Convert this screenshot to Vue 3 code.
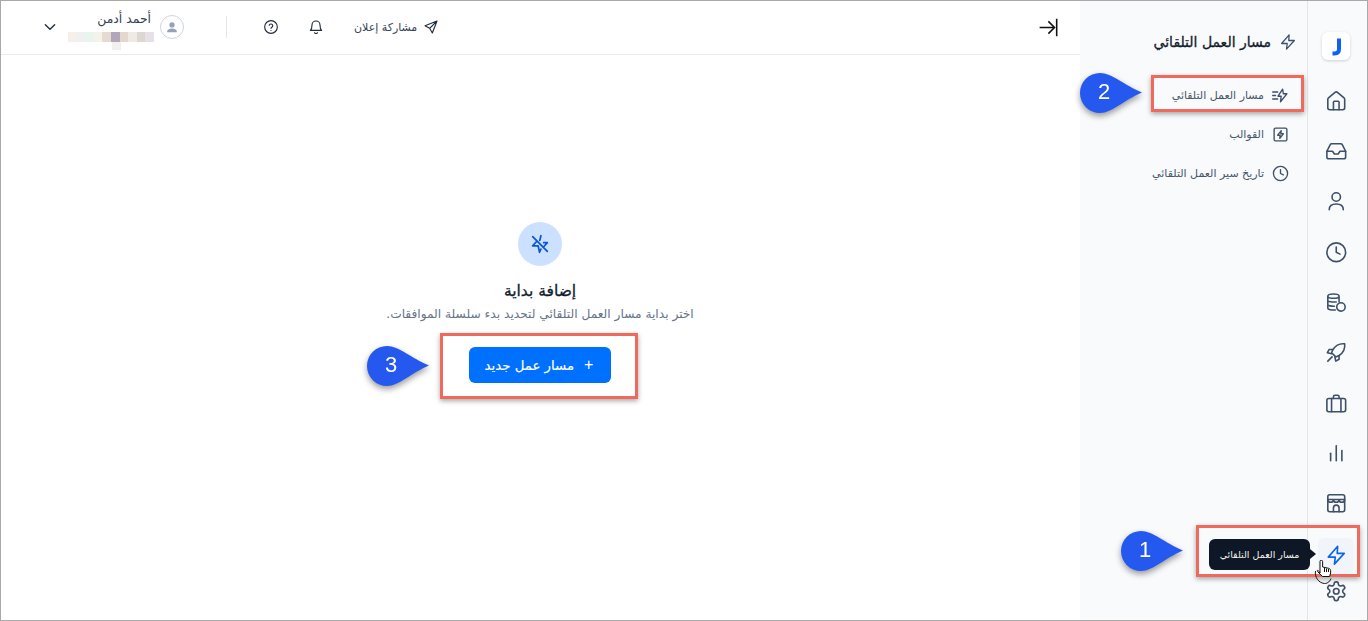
<template>
  <div class="page" dir="rtl">
    <nav class="rail">
      <div class="logo">
        <svg viewBox="0 0 28 28"><path d="M17 6.500V17c0 3-1.800 4.500-4.500 4.500H10.500" /></svg>
      </div>
      <div
        v-for="item in railItems"
        :key="item.name"
        class="rail-item"
        :class="{ active: item.active, short: item.name === 'settings' }"
      >
        <svg class="rail-icon" viewBox="0 0 24 24">
          <path v-for="d in item.paths" :key="d" :d="d" />
        </svg>
      </div>
    </nav>

    <aside class="sidebar">
      <div class="side-title">
        <svg class="title-icon" viewBox="0 0 24 24"><path :d="zap" /></svg>
        <span>مسار العمل التلقائي</span>
      </div>
      <div v-for="link in sideLinks" :key="link.label" class="side-link">
        <svg class="side-icon" viewBox="0 0 24 24">
          <path v-for="d in link.paths" :key="d" :d="d" />
        </svg>
        <span>{{ link.label }}</span>
      </div>
    </aside>

    <main class="main">
      <header class="topbar">
        <svg class="collapse" viewBox="0 0 24 24">
          <path d="M3 12h17M13 5l7 7-7 7M22.500 2v20" />
        </svg>
        <div class="top-actions">
          <div class="share">
            <svg class="top-icon" viewBox="0 0 24 24">
              <path d="M21 3 3 10l7 4 4 7zM21 3 10 14" />
            </svg>
            <span>مشاركة إعلان</span>
          </div>
          <svg class="top-icon bell" viewBox="0 0 24 24">
            <path d="M6 9a6 6 0 0 1 12 0c0 6 2.500 8 2.500 8h-17S6 15 6 9M10 20.500a2.200 2.200 0 0 0 4 0" />
          </svg>
          <svg class="top-icon help" viewBox="0 0 24 24">
            <path d="M12 2.500a9.500 9.500 0 1 0 0 19 9.500 9.500 0 0 0 0-19M9.300 9.300a2.800 2.800 0 0 1 5.400.9c0 1.800-2.700 2.300-2.700 3.800M12 17.300h.01" />
          </svg>
          <div class="divider"></div>
          <div class="avatar">
            <svg viewBox="0 0 24 24">
              <circle cx="12" cy="8.500" r="4.500" />
              <path d="M3.500 21c0-4.500 3.500-6.500 8.500-6.500s8.500 2 8.500 6.500z" />
            </svg>
          </div>
          <div class="profile">
            <span class="profile-name">أحمد أدمن</span>
            <div class="mosaic" dir="ltr">
              <i v-for="(c, i) in mosaic" :key="i" :style="{ background: c }"></i>
            </div>
            <i class="mosaic-extra"></i>
          </div>
          <svg class="chevron" viewBox="0 0 24 24"><path d="M5 8.500l7 7 7-7" /></svg>
        </div>
      </header>

      <section class="empty">
        <div class="empty-badge">
          <svg viewBox="0 0 24 24">
            <path d="M13 3 11.800 8M16 10.500h4l-3.500 4M13 17.500 11.500 21 10 14H4l4-4.500M4 4l16 16" />
          </svg>
        </div>
        <h2 class="empty-title">إضافة بداية</h2>
        <p class="empty-text">اختر بداية مسار العمل التلقائي لتحديد بدء سلسلة الموافقات.</p>
        <button class="new-btn"><span class="plus">+</span>مسار عمل جديد</button>
      </section>
    </main>

    <!-- annotations painted over the screenshot -->
    <div class="mark mark-1"></div>
    <div class="mark mark-2"></div>
    <div class="mark mark-3"></div>

    <div v-for="pin in pins" :key="pin.n" class="pin" :class="'pin-' + pin.n">
      <svg viewBox="0 0 64 42">
        <path d="M21 1C33 1 45 13 63 20.500 45 28 33 41 21 41A20 20 0 0 1 21 1z" />
      </svg>
      <span>{{ pin.n }}</span>
    </div>

    <div class="tooltip">مسار العمل التلقائي</div>

    <svg class="cursor" viewBox="0 0 20 26">
      <path class="cursor-arc" d="M1.500 11c-1 6 3 12 9 12.500 2 .1 5-1 6.500-5" />
      <path d="M6 13V1.500a1.300 1.300 0 0 1 2.600 0V7l6 1.300c1 .2 2 1 2 2V13l-1 3.500H8.500L3.500 11.500c-1-1.500 1-2 2.500 1.500z" />
      <path class="cursor-arc" d="M10.500 8v4M12.500 8.500V12M14.500 9v3" />
    </svg>

    <div class="frame"></div>
  </div>
</template>

<script setup>
const zap = 'M13.500 2.500 3.500 14H11l-1 7.500L20.500 10H13z'

const railItems = [
  { name: 'home', paths: ['M15 21v-8a1 1 0 0 0-1-1h-4a1 1 0 0 0-1 1v8', 'M3 10a2 2 0 0 1 .709-1.528l7-5.999a2 2 0 0 1 2.582 0l7 5.999A2 2 0 0 1 21 10v9a2 2 0 0 1-2 2H5a2 2 0 0 1-2-2z'] },
  { name: 'inbox', paths: ['M22 12h-6l-2 3h-4l-2-3H2', 'M5.450 5.110 2 12v6a2 2 0 0 0 2 2h16a2 2 0 0 0 2-2v-6l-3.450-6.890A2 2 0 0 0 16.760 4H7.240a2 2 0 0 0-1.790 1.110z'] },
  { name: 'user', paths: ['M12 3a4.500 4.500 0 1 0 0 9 4.500 4.500 0 0 0 0-9z', 'M4.500 21c0-4 3-6 7.500-6s7.500 2 7.500 6'] },
  { name: 'clock', paths: ['M12 2a10 10 0 1 0 0 20 10 10 0 0 0 0-20z', 'M12 6.500V12l4 2'] },
  { name: 'coins', paths: ['M3 5.500C3 2.500 15 2.500 15 5.500S3 8.500 3 5.500zM3 5.500v13c0 1.500 4 2 8 1.800M15 5.500v6M3 10c0 1.500 5 2 9 1.700M3 14.500c0 1.300 4 1.800 7 1.700', 'M17 12.500a4.500 4.500 0 1 0 0 9 4.500 4.500 0 0 0 0-9z'] },
  { name: 'rocket', paths: ['M21 3c-5-.6-9.500 1.500-12.500 6l-1.500 3.500 4.500 4.500 3.500-1.500c4.500-3 6.600-7.500 6-12.500z', 'M8.500 9 4.500 9 2.500 12.500l4.500 1', 'M15 15.500v4l-3.500 2-1-4.500', 'M3 21.500l4.500-4.500'] },
  { name: 'briefcase', paths: ['M4 7h16a2 2 0 0 1 2 2v10a2 2 0 0 1-2 2H4a2 2 0 0 1-2-2V9a2 2 0 0 1 2-2z', 'M7 7v14M17 7v14', 'M9 7V5a1.500 1.500 0 0 1 1.500-1.500h3A1.500 1.500 0 0 1 15 5v2'] },
  { name: 'chart', paths: ['M6 20v-8', 'M12 20V4', 'M18 20V9'] },
  { name: 'store', paths: ['M5 3h14a2 2 0 0 1 2 2v14a2 2 0 0 1-2 2H5a2 2 0 0 1-2-2V5a2 2 0 0 1 2-2z', 'M3 8h18M3 8c0 4 6 4 6 0 0 4 6 4 6 0 0 4 6 4 6 0', 'M9 21v-4a3 3 0 0 1 6 0v4'] },
  { name: 'zap', active: true, paths: [zap] },
  { name: 'settings', paths: ['M12.220 2h-.44a2 2 0 0 0-2 2v.18a2 2 0 0 1-1 1.730l-.43.25a2 2 0 0 1-2 0l-.15-.08a2 2 0 0 0-2.730.73l-.22.38a2 2 0 0 0 .73 2.730l.15.1a2 2 0 0 1 1 1.720v.51a2 2 0 0 1-1 1.740l-.15.09a2 2 0 0 0-.73 2.730l.22.38a2 2 0 0 0 2.730.73l.15-.08a2 2 0 0 1 2 0l.43.25a2 2 0 0 1 1 1.730V20a2 2 0 0 0 2 2h.44a2 2 0 0 0 2-2v-.18a2 2 0 0 1 1-1.730l.43-.25a2 2 0 0 1 2 0l.15.08a2 2 0 0 0 2.730-.73l.22-.39a2 2 0 0 0-.73-2.730l-.15-.08a2 2 0 0 1-1-1.740v-.5a2 2 0 0 1 1-1.740l.15-.09a2 2 0 0 0 .73-2.730l-.22-.38a2 2 0 0 0-2.730-.73l-.15.08a2 2 0 0 1-2 0l-.43-.25a2 2 0 0 1-1-1.730V4a2 2 0 0 0-2-2z', 'M12 9a3 3 0 1 0 0 6 3 3 0 0 0 0-6z'] },
]

const sideLinks = [
  { label: 'مسار العمل التلقائي', paths: ['M15 3 8.500 13H13l-1 8 9-11.500h-5z', 'M1 7h7M1 12h4M1 17h7'] },
  { label: 'القوالب', paths: ['M5 3h14a2 2 0 0 1 2 2v14a2 2 0 0 1-2 2H5a2 2 0 0 1-2-2V5a2 2 0 0 1 2-2z', 'M13 6.500 8 13h3.500L11 17.500l5-6.500h-3.500z'] },
  { label: 'تاريخ سير العمل التلقائي', paths: ['M12 2a10 10 0 1 0 0 20 10 10 0 0 0 0-20z', 'M12 6.500V12l4 2'] },
]

const mosaic = ['#f6f0ea', '#eff0ef', '#e9f4ee', '#f5f2ea', '#e6dbd0', '#b2a6bd', '#e4d8cd', '#efeae4', '#ddd7d3', '#e7e0e6']

const pins = [{ n: 1 }, { n: 2 }, { n: 3 }]
</script>

<style>
html,
body {
  margin: 0;
  background: #fff;
}
</style>

<style scoped>
.page {
  position: relative;
  display: flex;
  width: 1368px;
  height: 621px;
  overflow: hidden;
  background: #fff;
  color: #334155;
  font-family: "DejaVu Sans", sans-serif;
}

.frame {
  position: absolute;
  inset: 0;
  border: 1px solid #a9a9a9;
  pointer-events: none;
}

/* icon rail */
.rail {
  flex: 0 0 61px;
  display: flex;
  flex-direction: column;
  align-items: center;
  padding-top: 32px;
  padding-right: 4px;
  box-sizing: border-box;
  background: #f9fafc;
  border-left: 1px solid #e3e6ea;
}

.logo {
  flex: 0 0 28px;
  width: 28px;
  margin-bottom: 16px;
  background: #fff;
  border-radius: 6px;
  box-shadow: 0 1px 3px rgba(15, 23, 42, 0.18);
}

.logo svg {
  display: block;
  width: 28px;
  height: 28px;
  fill: none;
  stroke: #0b63f0;
  stroke-width: 4;
}

.rail-item {
  display: flex;
  flex: 0 0 50.300px;
  align-items: center;
  justify-content: center;
  width: 36px;
}

.rail-item.short {
  flex-basis: 24px;
}

.rail-item.active {
  flex-basis: 36px;
  margin: 9px 0 6px;
  background: #f1f4f8;
  border-radius: 6px;
}

.rail-icon {
  width: 22.500px;
  height: 22.500px;
  fill: none;
  stroke: #3d5068;
  stroke-width: 1.700;
  stroke-linecap: round;
  stroke-linejoin: round;
}

.active .rail-icon {
  stroke: #0b63f0;
}

/* secondary sidebar */
.sidebar {
  flex: 0 0 227px;
  padding-top: 31px;
  box-sizing: border-box;
  background: #f9fafc;
}

.side-title {
  display: flex;
  align-items: center;
  gap: 8px;
  height: 22px;
  margin-bottom: 23px;
  padding-right: 10px;
  color: #111c2d;
  font-size: 14px;
  -webkit-text-stroke: 0.3px #111c2d;
  white-space: nowrap;
}

.title-icon {
  width: 18px;
  height: 18px;
  fill: none;
  stroke: #3d5068;
  stroke-width: 1.700;
  stroke-linejoin: round;
}

.side-link {
  display: flex;
  align-items: center;
  gap: 8px;
  height: 39px;
  padding-right: 18px;
  color: #45566b;
  font-size: 11px;
  white-space: nowrap;
}

.side-icon {
  flex: none;
  width: 17px;
  height: 17px;
  fill: none;
  stroke: #3d5068;
  stroke-width: 1.900;
  stroke-linecap: round;
  stroke-linejoin: round;
}

/* main column */
.main {
  flex: 1;
  display: flex;
  flex-direction: column;
  min-width: 0;
}

.topbar {
  display: flex;
  flex: 0 0 54px;
  align-items: center;
  justify-content: space-between;
  padding-right: 22px;
  padding-left: 42px;
  border-bottom: 1px solid #e9ebf0;
}

.collapse {
  width: 21px;
  height: 21px;
  fill: none;
  stroke: #111;
  stroke-width: 1.800;
}

.top-actions {
  display: flex;
  align-items: center;
}

.share {
  display: flex;
  align-items: center;
  gap: 6px;
  margin-left: 30px;
  color: #334155;
  font-size: 11px;
  white-space: nowrap;
}

.top-icon {
  flex: none;
  width: 16px;
  height: 16px;
  fill: none;
  stroke: #1f2d3d;
  stroke-width: 1.700;
  stroke-linecap: round;
  stroke-linejoin: round;
}

.bell {
  margin-left: 29px;
}

.help {
  margin-left: 36px;
}

.divider {
  width: 1px;
  height: 22px;
  margin-left: 42px;
  background: #e3e6ea;
}

.avatar {
  display: flex;
  flex: none;
  align-items: center;
  justify-content: center;
  box-sizing: border-box;
  width: 24px;
  height: 24px;
  margin-left: 6px;
  border: 1px solid #cbd5e1;
  border-radius: 50%;
}

.avatar svg {
  width: 14px;
  height: 14px;
  fill: #94a3b8;
}

.profile {
  position: relative;
  display: flex;
  flex-direction: column;
  align-items: flex-start;
  width: 86px;
  height: 32px;
  margin-left: 10px;
}

.profile-name {
  height: 16px;
  padding-right: 3px;
  color: #334155;
  font-size: 12.400px;
  line-height: 16px;
  white-space: nowrap;
}

.mosaic {
  display: flex;
  height: 10px;
  margin-top: 5px;
}

.mosaic i {
  display: block;
  width: 8.600px;
}

.mosaic-extra {
  position: absolute;
  top: 31px;
  left: 44px;
  width: 9px;
  height: 8px;
  background: #f3efee;
}

.chevron {
  width: 16px;
  height: 16px;
  fill: none;
  stroke: #1f2d3d;
  stroke-width: 2;
  stroke-linecap: round;
  stroke-linejoin: round;
}

/* empty state */
.empty {
  display: flex;
  flex-direction: column;
  align-items: center;
  padding-top: 167px;
}

.empty-badge {
  display: flex;
  align-items: center;
  justify-content: center;
  width: 44px;
  height: 44px;
  background: #cce0ff;
  border-radius: 50%;
}

.empty-badge svg {
  width: 22px;
  height: 22px;
  fill: none;
  stroke: #0b55d9;
  stroke-width: 1.900;
  stroke-linecap: round;
  stroke-linejoin: round;
}

.empty-title {
  margin: 14px 0 0;
  color: #111c2d;
  font-size: 15.500px;
  font-weight: 400;
  -webkit-text-stroke: 0.3px #111c2d;
  line-height: 22px;
}

.empty-text {
  margin: 3px 0 0;
  color: #64748b;
  font-size: 12.200px;
  line-height: 18px;
  white-space: nowrap;
}

.new-btn {
  display: flex;
  align-items: center;
  justify-content: center;
  gap: 10px;
  width: 142px;
  height: 36px;
  margin-top: 24px;
  padding: 0 2px 0 0;
  color: #fff;
  background: #0070ff;
  border: 0;
  border-radius: 6px;
  font-family: inherit;
  font-size: 13.300px;
  -webkit-text-stroke: 0.15px #fff;
}

.plus {
  font: 400 16px "Liberation Sans", sans-serif;
  -webkit-text-stroke: 0;
}

/* annotations */
.mark {
  position: absolute;
  box-sizing: border-box;
  border: 3px solid #ef6a5d;
  box-shadow: 0 2px 5px rgba(0, 0, 0, 0.35);
}

.mark-1 {
  top: 525px;
  left: 1196px;
  width: 164px;
  height: 52px;
}

.mark-2 {
  top: 75px;
  left: 1151px;
  width: 153px;
  height: 37px;
}

.mark-3 {
  top: 333px;
  left: 440px;
  width: 198px;
  height: 66px;
}

.pin {
  position: absolute;
  width: 64px;
  height: 42px;
  filter: drop-shadow(0 3px 3px rgba(0, 0, 0, 0.4));
}

.pin svg {
  display: block;
  width: 64px;
  height: 42px;
  fill: #2558ee;
}

.pin span {
  position: absolute;
  top: 7px;
  left: 19px;
  color: #fff;
  font: 400 22px/26px "Liberation Sans", sans-serif;
}

.pin-1 {
  top: 530px;
  left: 1120px;
}

.pin-2 {
  top: 72px;
  left: 1079px;
}

.pin-3 {
  top: 345px;
  left: 366px;
}

.tooltip {
  position: absolute;
  top: 539px;
  left: 1209px;
  width: 101px;
  height: 31px;
  color: #f5f1e6;
  background: #0e1726;
  border-radius: 6px;
  font-size: 9.500px;
  line-height: 31px;
  text-align: center;
  white-space: nowrap;
}

.tooltip::after {
  content: "";
  position: absolute;
  top: 10px;
  left: 100%;
  border-top: 5px solid transparent;
  border-bottom: 5px solid transparent;
  border-left: 6px solid #0e1726;
}

.cursor {
  position: absolute;
  top: 560px;
  left: 1314px;
  width: 20px;
  height: 26px;
  fill: #fff;
  stroke: #111;
  stroke-width: 1;
}

.cursor-arc {
  fill: none;
}
</style>
